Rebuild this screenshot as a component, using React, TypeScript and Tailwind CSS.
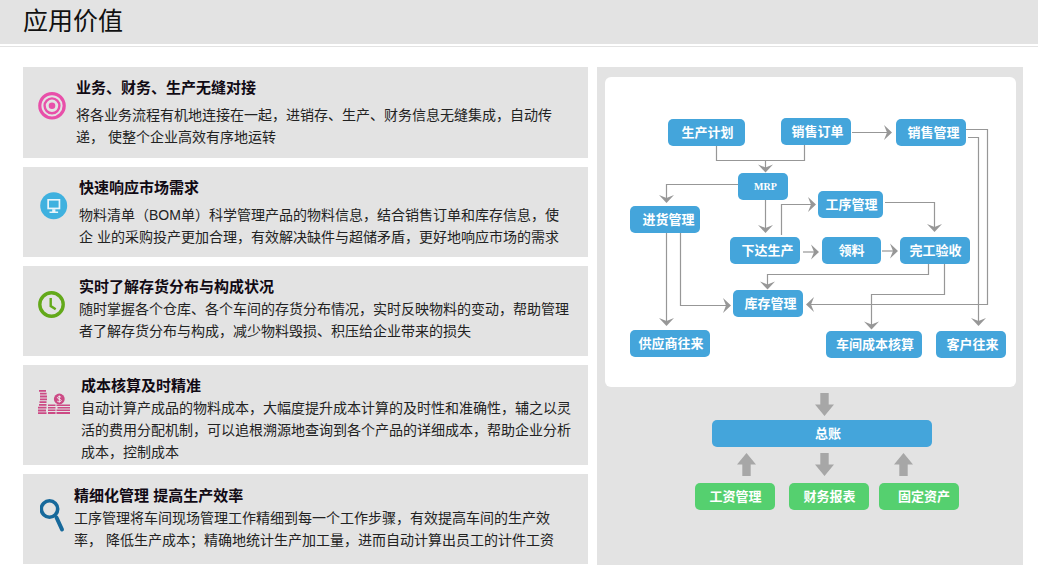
const Target = () => (
  <svg width="28" height="28" viewBox="0 0 28 28" className="block">
    <circle cx="14" cy="13.8" r="12.2" fill="none" stroke="#e84fa9" strokeWidth="3.2" />
    <circle cx="14" cy="13.8" r="7.4" fill="none" stroke="#e84fa9" strokeWidth="2.4" />
    <circle cx="14" cy="13.8" r="3.3" fill="#e84fa9" />
  </svg>
);
const Monitor = () => (
  <svg width="28" height="28" viewBox="0 0 28 28" className="block">
    <circle cx="13.7" cy="13.7" r="13.5" fill="#3fb1df" />
    <path d="M7.3 7h13v10.3h-13z" fill="#e8f5fb" />
    <path d="M9 8.6h9.6v7H9z" fill="#3fb1df" />
    <path d="M12.2 17.3h3.2v2.2h-3.2z M9.5 19.5h8.6V21H9.5z" fill="#e8f5fb" />
  </svg>
);
const Clock = () => (
  <svg width="28" height="28" viewBox="0 0 28 28" className="block">
    <circle cx="13.5" cy="13.5" r="11.7" fill="none" stroke="#63a91a" strokeWidth="3.4" />
    <path d="M12.7 7v8l5 3.2" fill="none" stroke="#63a91a" strokeWidth="2.4" />
  </svg>
);
const Coins = () => (
  <svg width="33" height="24" viewBox="0 0 33 24" className="block">
    <g fill="#cc4a85">
      <path d="M1 0h7v1.8H1z M2 2.8h6.6v1.8H2z M2 5.6h7v1.8H2z M2 8.4h7v1.8H2z M1.5 11.2h7v1.8h-7z M1 14h7.5v1.8H1z M0 16.8h8.5v1.8H0z M0 19.6h8v1.8H0z M0 22.2h8.5v1.8H0z" />
      <path d="M10 14.5h7.5v1.6H10z M10 17h7.5v1.6H10z M10 19.5h7.5v1.6H10z M10 22h7.5v2H10z" />
      <path d="M18.5 14.5H32v1.6H18.5z M19.5 17H32v1.6H19.5z M18.5 19.5H32v1.6H18.5z M18.5 22H32v2H18.5z" />
      <circle cx="21.3" cy="9" r="5.4" />
    </g>
    <path d="M23.1 7.2c-.9-.9-3.7-.8-3.7.6s3.8 1.1 3.8 2.7-2.9 1.6-4 .6M21.3 5.5v7" fill="none" stroke="#f3f3f3" strokeWidth="0.9" />
  </svg>
);
const Search = () => (
  <svg width="26" height="35" viewBox="0 0 26 35" className="block">
    <circle cx="9.5" cy="10" r="8.2" fill="none" stroke="#17699b" strokeWidth="3.6" />
    <path d="M16.5 18.5 22 30.5" fill="none" stroke="#17699b" strokeWidth="4" strokeLinecap="round" />
  </svg>
);

const cards = [
  {
    h: "h-[91px]", icon: <Target />, iconBox: "ml-[15px] mt-[25px] w-[38px]", pt: "pt-[11px]", gap: "mt-[6px]",
    title: "业务、财务、生产无缝对接",
    lines: ["将各业务流程有机地连接在一起，进销存、生产、财务信息无缝集成，自动传", "递， 使整个企业高效有序地运转"],
  },
  {
    h: "h-[90px]", icon: <Monitor />, iconBox: "ml-[17px] mt-[25px] w-[39px]", pt: "pt-[11px]", gap: "mt-[6px]",
    title: "快速响应市场需求",
    lines: ["物料清单（BOM单）科学管理产品的物料信息，结合销售订单和库存信息，使", "企 业的采购投产更加合理，有效解决缺件与超储矛盾，更好地响应市场的需求"],
  },
  {
    h: "h-[90px]", icon: <Clock />, iconBox: "ml-[15px] mt-[25px] w-[41px]", pt: "pt-[11px]", gap: "mt-px",
    title: "实时了解存货分布与构成状况",
    lines: ["随时掌握各个仓库、各个车间的存货分布情况，实时反映物料的变动，帮助管理", "者了解存货分布与构成，减少物料毁损、积压给企业带来的损失"],
  },
  {
    h: "h-[100px]", icon: <Coins />, iconBox: "ml-[15px] mt-[25px] w-[43px]", pt: "pt-[11px]", gap: "mt-px",
    title: "成本核算及时精准",
    lines: ["自动计算产成品的物料成本，大幅度提升成本计算的及时性和准确性，辅之以灵", "活的费用分配机制，可以追根溯源地查询到各个产品的详细成本，帮助企业分析", "成本，控制成本"],
  },
  {
    h: "h-[90px]", icon: <Search />, iconBox: "ml-[17px] mt-[25px] w-[34px]", pt: "pt-[12px]", gap: "mt-px",
    title: "精细化管理 提高生产效率",
    lines: ["工序管理将车间现场管理工作精细到每一个工作步骤，有效提高车间的生产效", "率， 降低生产成本；精确地统计生产加工量，进而自动计算出员工的计件工资"],
  },
];

const nodes = [
  { t: "生产计划", x: 668, y: 119, w: 77, dx: 1 },
  { t: "销售订单", x: 781, y: 118, w: 70, dx: 1.5 },
  { t: "销售管理", x: 896, y: 119, w: 70, dx: 2.5 },
  { t: "MRP", x: 738, y: 173, w: 50, dx: 2.5 },
  { t: "进货管理", x: 630, y: 206, w: 70, dx: 3.5 },
  { t: "工序管理", x: 818, y: 191, w: 65, dx: 1 },
  { t: "下达生产", x: 730, y: 237, w: 70, dx: 2.5 },
  { t: "领料", x: 822, y: 237, w: 59, dx: 0 },
  { t: "完工验收", x: 900, y: 237, w: 70, dx: 0.5 },
  { t: "库存管理", x: 733, y: 290, w: 70, dx: 2.5 },
  { t: "供应商往来", x: 630, y: 330, w: 80, dx: 1 },
  { t: "车间成本核算", x: 826, y: 331, w: 96, dx: 1 },
  { t: "客户往来", x: 936, y: 331, w: 70, dx: 1.5 },
];

const lines = [
  "M716.5 146V160.5H804.5V145M765.5 160.5V168",
  "M738 184.5H666.5V199",
  "M765.5 200V229",
  "M781.5 235V204.5H812",
  "M852 132.5H888",
  "M885 202.5H934.5V228",
  "M803 252H815",
  "M882 251H894",
  "M666.5 233V322",
  "M680.5 233V305.5H727",
  "M928.5 264V274.5H767.5V286",
  "M944.5 264V294.5H871.5V326",
  "M966 129.5H987.5V304.5H810",
  "M968 137.5H978.5V322",
];

const heads: [number, number, "d" | "r" | "l"][] = [
  [765.5, 172.5, "d"], [666.5, 203, "d"], [765.5, 233, "d"], [816, 204.5, "r"],
  [892, 132.5, "r"], [934.5, 232, "d"], [819, 252, "r"], [898, 251, "r"],
  [666.5, 326, "d"], [731, 305.5, "r"], [767.5, 289.5, "d"], [871.5, 329.5, "d"],
  [806, 304.5, "l"], [978.5, 326, "d"],
];

const headPoints = (x: number, y: number, dir: "d" | "r" | "l") => {
  if (dir === "d") return `${x},${y} ${x + 7.5},${y - 8} ${x},${y - 5} ${x - 7.5},${y - 8}`;
  if (dir === "r") return `${x},${y} ${x - 8},${y + 7.5} ${x - 5},${y} ${x - 8},${y - 7.5}`;
  return `${x},${y} ${x + 8},${y + 7.5} ${x + 5},${y} ${x + 8},${y - 7.5}`;
};

const BigArrow = ({ up, className }: { up?: boolean; className: string }) => (
  <svg width="19" height="23" viewBox="0 0 19 23" className={className}>
    <path
      d={up ? "M9.5 0 19 11.5H13.7V23H5.3V11.5H0z" : "M5.3 0H13.7V11.5H19L9.5 23 0 11.5H5.3z"}
      fill="#a7a7a7"
    />
  </svg>
);

const Pill = ({ children, className }: { children: string; className: string }) => (
  <div
    className={`flex h-[27px] items-center justify-center rounded-[5px] text-[13px] font-bold text-white ${className}`}
  >
    {children}
  </div>
);

export default function App() {
  return (
    <div className="h-[578px] w-[1038px] overflow-hidden bg-white font-['Liberation_Sans','Noto_Sans_CJK_SC',sans-serif] text-[#222]">
      <div className="h-[44px] bg-[#e3e3e3] pl-[23px] text-[25px] leading-[43px] text-[#111]">应用价值</div>
      <div className="mt-[2px] h-px bg-[#e3e3e3]" />
      <div className="mt-[20px] flex gap-[9px] pl-[23px]">
        <div className="flex w-[565px] flex-col gap-[9px]">
          {cards.map((c) => (
            <div key={c.title} className={`flex bg-[#e3e3e3] ${c.h}`}>
              <div className={`shrink-0 ${c.iconBox}`}>{c.icon}</div>
              <div className={c.pt}>
                <div className="text-[15px] leading-[20px] font-bold text-[#110a14]">{c.title}</div>
                <div className={c.gap}>
                  {c.lines.map((l) => (
                    <div key={l} className="text-[14px] leading-[22px] whitespace-nowrap">{l}</div>
                  ))}
                </div>
              </div>
            </div>
          ))}
        </div>
        <div className="h-[498px] w-[426px] bg-[#e3e3e3] pt-[10px]">
          <div className="relative ml-[8px] h-[310px] w-[411px] rounded-[6px] bg-white">
            <svg viewBox="605 77 411 310" width="411" height="310" className="absolute top-0 left-0">
              <g fill="none" stroke="#979797" strokeWidth="1.2">
                {lines.map((d) => <path key={d} d={d} />)}
              </g>
              <g fill="#979797">
                {heads.map(([x, y, dir]) => <polygon key={`${x}-${y}`} points={headPoints(x, y, dir)} />)}
              </g>
            </svg>
            {nodes.map((n) => (
              <div
                key={n.t}
                className={`absolute flex h-[27px] items-center justify-center rounded-[5px] bg-[#44a5db] font-['Liberation_Serif','Noto_Sans_CJK_SC',serif] font-bold text-white ${n.t === "MRP" ? "text-[10px]" : "text-[13px]"}`}
                style={{ left: n.x - 605, top: n.y - 77, width: n.w, paddingLeft: n.dx * 2 }}
              >
                {n.t}
              </div>
            ))}
          </div>
          <BigArrow className="mt-[6px] ml-[218px] block" />
          <Pill className="mt-[4px] ml-[115px] w-[220px] bg-[#44a5db] pl-[12px]">总账</Pill>
          <div className="mt-[6px] flex">
            <BigArrow up className="ml-[140px] block" />
            <BigArrow className="ml-[59px] block" />
            <BigArrow up className="ml-[60px] block" />
          </div>
          <div className="mt-[7px] ml-[98px] flex gap-[14px]">
            <Pill className="w-[80px] bg-[#55d06f] pl-px">工资管理</Pill>
            <Pill className="-mr-[4px] w-[80px] bg-[#55d06f] pl-px">财务报表</Pill>
            <Pill className="w-[80px] bg-[#55d06f] pl-[10px]">固定资产</Pill>
          </div>
        </div>
      </div>
    </div>
  );
}
